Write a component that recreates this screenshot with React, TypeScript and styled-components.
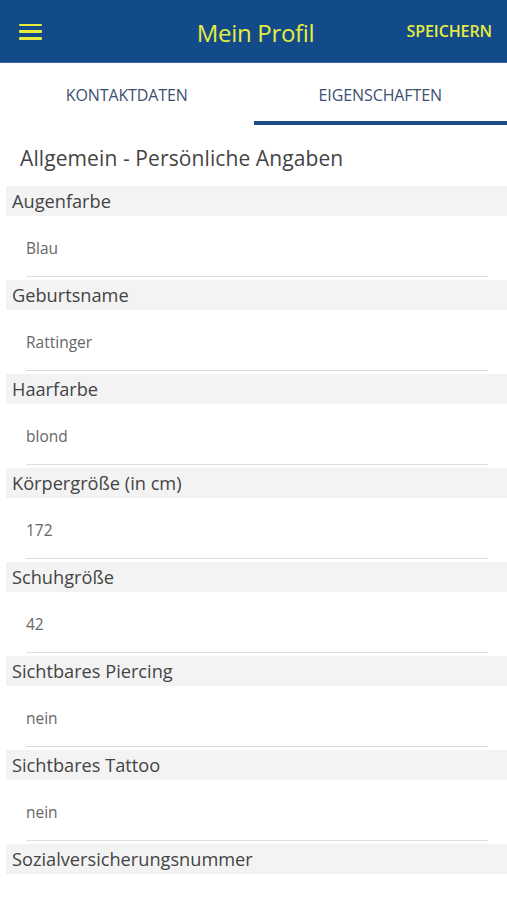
import React from "react";
import styled, { createGlobalStyle } from "styled-components";

const Global = createGlobalStyle`
  html, body { margin: 0; padding: 0; background: #fff; }
  body { font-family: "Open Sans", "Noto Sans", sans-serif; }
  * { box-sizing: border-box; }
`;

const Page = styled.div`
  width: 507px;
  min-height: 900px;
  background: #fff;
  display: flex;
  flex-direction: column;
`;

const Header = styled.header`
  height: 63px;
  background: #134a8a;
  display: grid;
  grid-template-columns: 1fr auto 1fr;
  align-items: center;
  padding: 0 15px 0 19px;
  border-bottom: 1px solid #3a6aa5;
`;

const Menu = styled.button`
  width: 23px;
  height: 16px;
  padding: 0;
  border: 0;
  background: transparent;
  display: flex;
  flex-direction: column;
  justify-content: space-between;
  margin-top: 1px;
`;

const MenuLine = styled.span`
  display: block;
  height: 2.5px;
  width: 100%;
  background: #e6ec3e;
  border-radius: 1px;
`;

const Title = styled.h1`
  margin: 0;
  font-size: 24px;
  font-weight: 400;
  color: #e6ec3e;
  letter-spacing: -0.3px;
  padding-top: 2px;
`;

const Save = styled.span`
  justify-self: end;
  font-size: 16px;
  font-weight: 600;
  color: #e6ec3e;
  letter-spacing: -0.1px;
`;

const Tabs = styled.nav`
  display: grid;
  grid-template-columns: 1fr 1fr;
  height: 62px;
`;

const Tab = styled.div<{ $active?: boolean }>`
  display: flex;
  align-items: center;
  justify-content: center;
  font-size: 16px;
  color: #3d4f72;
  letter-spacing: -0.1px;
  padding-top: 6px;
  border-bottom: 4px solid ${(p) => (p.$active ? "#1a4d8c" : "transparent")};
`;

const SectionTitle = styled.h2`
  margin: 0;
  padding: 19px 0 0 20px;
  height: 61px;
  font-size: 21px;
  font-weight: 400;
  color: #444;
  letter-spacing: 0.1px;
`;

const Field = styled.div`
  display: flex;
  flex-direction: column;
  padding-bottom: 3px;
`;

const Label = styled.div`
  margin-left: 6px;
  height: 30px;
  background: #f3f3f3;
  padding-left: 6px;
  display: flex;
  align-items: center;
  font-size: 18.2px;
  color: #444;
`;

const Value = styled.div`
  margin: 0 19px 0 26px;
  height: 61px;
  display: flex;
  align-items: center;
  font-size: 15.5px;
  color: #666;
  padding-top: 4px;
  border-bottom: 1px solid #dcdcdc;
`;

const fields: { label: string; value?: string }[] = [
  { label: "Augenfarbe", value: "Blau" },
  { label: "Geburtsname", value: "Rattinger" },
  { label: "Haarfarbe", value: "blond" },
  { label: "Körpergröße (in cm)", value: "172" },
  { label: "Schuhgröße", value: "42" },
  { label: "Sichtbares Piercing", value: "nein" },
  { label: "Sichtbares Tattoo", value: "nein" },
  { label: "Sozialversicherungsnummer" },
];

export default function App() {
  return (
    <Page>
      <Global />
      <Header>
        <Menu aria-label="Menü">
          <MenuLine />
          <MenuLine />
          <MenuLine />
        </Menu>
        <Title>Mein Profil</Title>
        <Save>SPEICHERN</Save>
      </Header>
      <Tabs>
        <Tab>KONTAKTDATEN</Tab>
        <Tab $active>EIGENSCHAFTEN</Tab>
      </Tabs>
      <SectionTitle>Allgemein - Persönliche Angaben</SectionTitle>
      {fields.map((f) => (
        <Field key={f.label}>
          <Label>{f.label}</Label>
          {f.value !== undefined && <Value>{f.value}</Value>}
        </Field>
      ))}
    </Page>
  );
}
